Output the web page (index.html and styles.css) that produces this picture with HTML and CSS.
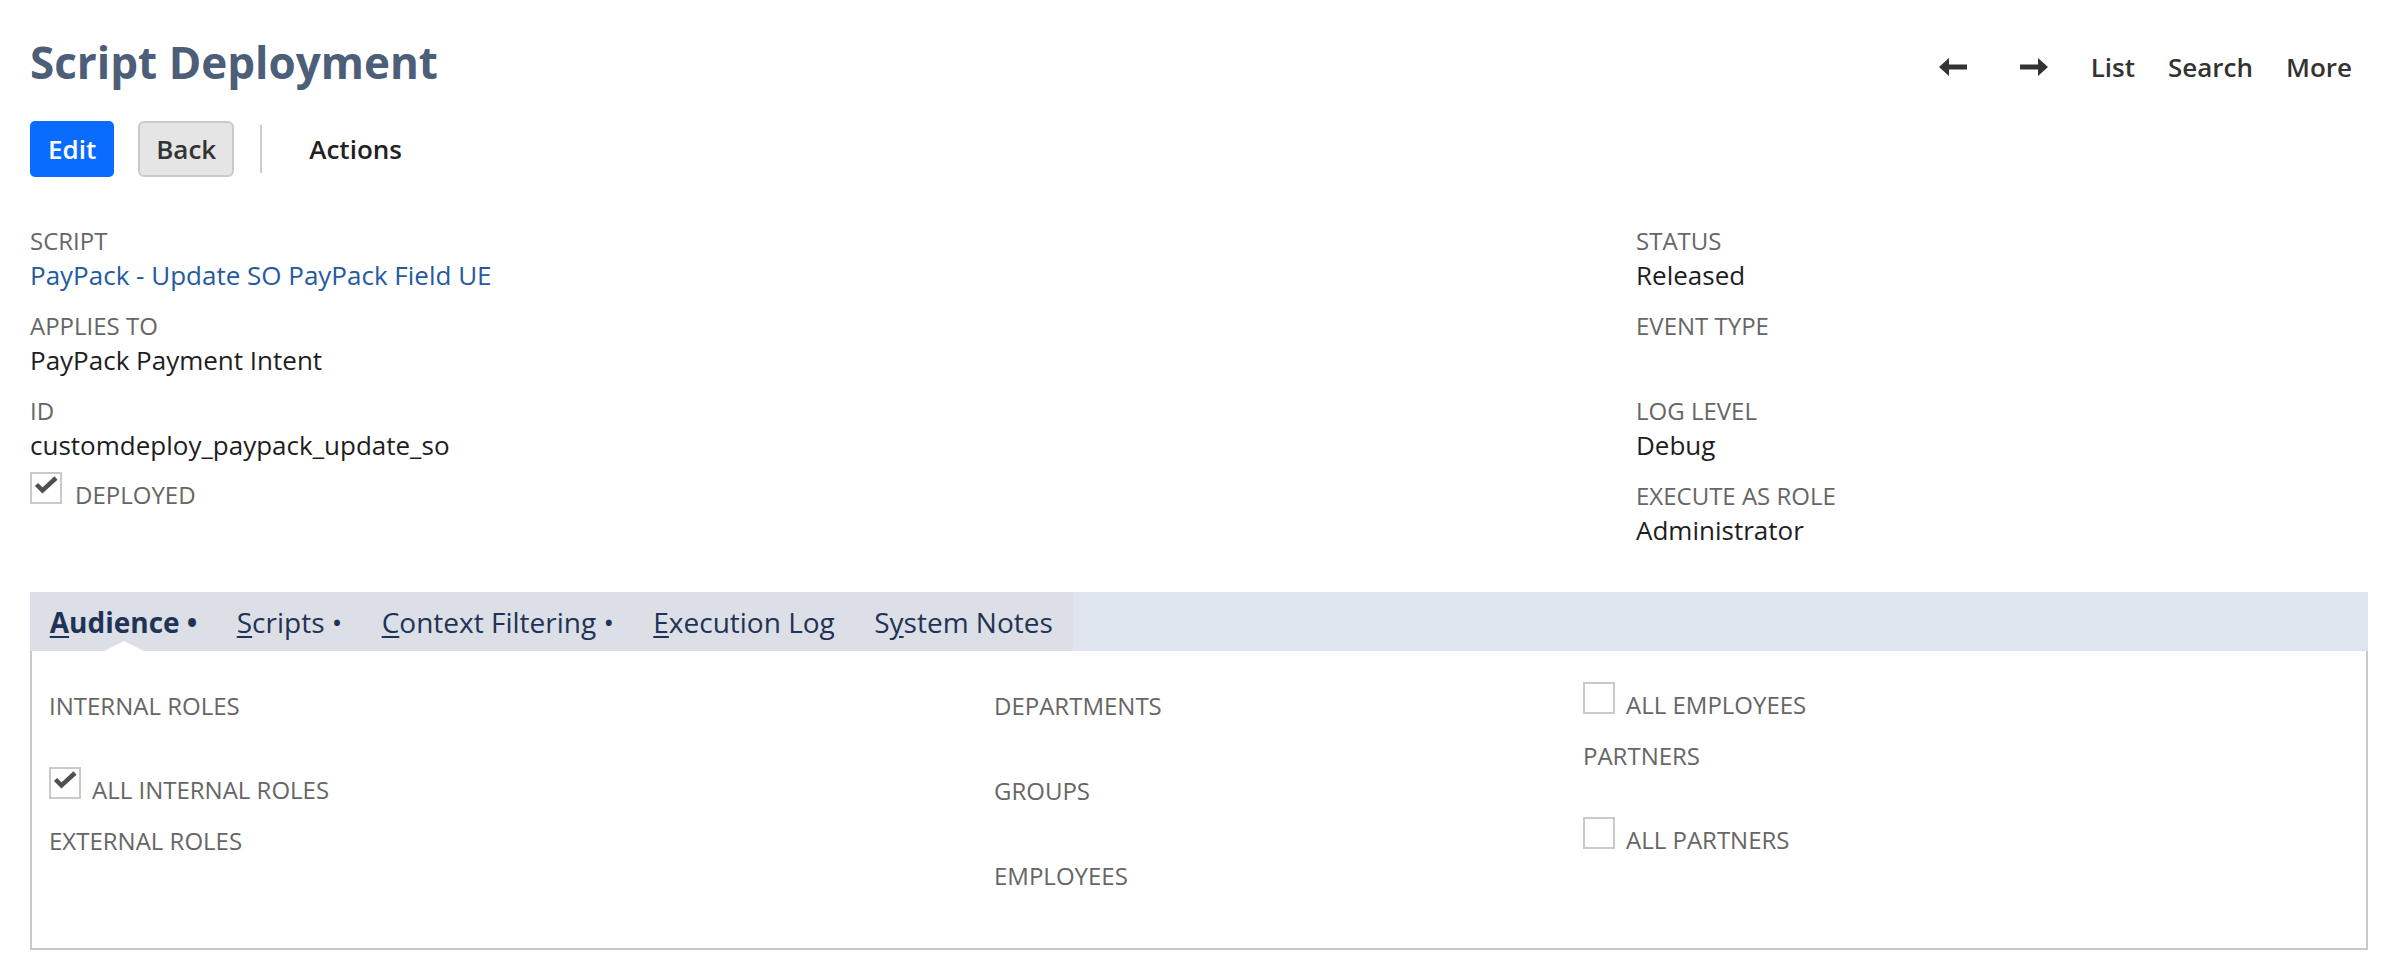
FILE: index.html
```html
<!DOCTYPE html>
<html lang="en">
<head>
    <meta charset="UTF-8">
    <title>Script Deployment</title>
    <link rel="stylesheet" href="styles.css">
</head>
<body>
<div class="page">

    <!-- Title and record navigation -->
    <div class="page-header">
        <h1 class="page-title">Script Deployment</h1>
        <div class="nav">
            <a class="nav-arrow nav-prev" href="#" title="Previous">
                <svg viewBox="0 0 28 18"><path d="M0 9 L10 0 L10 6.5 L28 6.5 L28 11.5 L10 11.5 L10 18 Z"/></svg>
            </a>
            <a class="nav-arrow nav-next" href="#" title="Next">
                <svg viewBox="0 0 28 18"><path d="M28 9 L18 0 L18 6.5 L0 6.5 L0 11.5 L18 11.5 L18 18 Z"/></svg>
            </a>
            <a href="#">List</a>
            <a href="#">Search</a>
            <a href="#">More</a>
        </div>
    </div>

    <!-- Buttons -->
    <div class="toolbar">
        <button class="btn btn-primary">Edit</button>
        <button class="btn">Back</button>
        <span class="toolbar-sep"></span>
        <span class="toolbar-menu">Actions</span>
    </div>

    <!-- Main fields -->
    <div class="fields">
        <div class="field-col">
            <div class="field">
                <div class="field-label">Script</div>
                <div class="field-value"><a href="#">PayPack - Update SO PayPack Field UE</a></div>
            </div>
            <div class="field">
                <div class="field-label">Applies To</div>
                <div class="field-value">PayPack Payment Intent</div>
            </div>
            <div class="field">
                <div class="field-label">ID</div>
                <div class="field-value">customdeploy_paypack_update_so</div>
            </div>
            <div class="check-row check-row-wide">
                <span class="checkbox checked">
                    <svg viewBox="0 0 28 28"><polyline points="4.5,10.5 10.5,16.5 24,4"/></svg>
                </span>
                <span class="check-label">Deployed</span>
            </div>
        </div>
        <div class="field-col">
            <div class="field">
                <div class="field-label">Status</div>
                <div class="field-value">Released</div>
            </div>
            <div class="field">
                <div class="field-label">Event Type</div>
                <div class="field-value"></div>
            </div>
            <div class="field">
                <div class="field-label">Log Level</div>
                <div class="field-value">Debug</div>
            </div>
            <div class="field">
                <div class="field-label">Execute As Role</div>
                <div class="field-value">Administrator</div>
            </div>
        </div>
    </div>

    <!-- Subtabs -->
    <div class="tabs">
        <div class="tab-bar">
            <div class="tab-list">
                <span class="tab tab-active"><u>A</u>udience •</span>
                <span class="tab"><u>S</u>cripts •</span>
                <span class="tab"><u>C</u>ontext Filtering •</span>
                <span class="tab"><u>E</u>xecution Log</span>
                <span class="tab">S<u>y</u>stem Notes</span>
            </div>
        </div>
        <div class="tab-panel">
            <div class="audience">
                <div class="field-col">
                    <div class="field">
                        <div class="field-label">Internal Roles</div>
                        <div class="field-value"></div>
                    </div>
                    <div class="check-row">
                        <span class="checkbox checked">
                            <svg viewBox="0 0 28 28"><polyline points="4.5,10.5 10.5,16.5 24,4"/></svg>
                        </span>
                        <span class="check-label">All Internal Roles</span>
                    </div>
                    <div class="field">
                        <div class="field-label">External Roles</div>
                        <div class="field-value"></div>
                    </div>
                </div>
                <div class="field-col">
                    <div class="field">
                        <div class="field-label">Departments</div>
                        <div class="field-value"></div>
                    </div>
                    <div class="field">
                        <div class="field-label">Groups</div>
                        <div class="field-value"></div>
                    </div>
                    <div class="field">
                        <div class="field-label">Employees</div>
                        <div class="field-value"></div>
                    </div>
                </div>
                <div class="field-col">
                    <div class="check-row">
                        <span class="checkbox"></span>
                        <span class="check-label">All Employees</span>
                    </div>
                    <div class="field">
                        <div class="field-label">Partners</div>
                        <div class="field-value"></div>
                    </div>
                    <div class="check-row">
                        <span class="checkbox"></span>
                        <span class="check-label">All Partners</span>
                    </div>
                </div>
            </div>
        </div>
    </div>

</div>
</body>
</html>
```

FILE: styles.css
```css
body {
    margin: 0;
    background-color: #fff;
    color: #222;
    font-family: "Open Sans", "Liberation Sans", sans-serif;
}
.page {
    padding: 0 28px 0 30px;
}

/* Header */
.page-header {
    display: flex;
    justify-content: space-between;
    align-items: flex-start;
    padding-top: 30px;
    padding-right: 16px;
}
.page-title {
    margin: 0;
    font-size: 44px;
    line-height: 64px;
    font-weight: 700;
    color: #4d5e78;
}
.nav {
    display: flex;
    align-items: center;
    gap: 33px;
    margin-top: 19px;
}
.nav a {
    font-size: 26px;
    line-height: 36px;
    font-weight: 600;
    color: #333;
    text-decoration: none;
}
.nav-arrow svg {
    display: block;
    width: 28px;
    height: 18px;
    fill: #333;
}
.nav-prev {
    margin-right: 20px;
}
.nav-next {
    margin-right: 10px;
}

/* Toolbar */
.toolbar {
    display: flex;
    align-items: center;
    margin-top: 27px;
    height: 56px;
}
.btn {
    box-sizing: border-box;
    height: 56px;
    padding: 0 16px;
    margin-right: 24px;
    font-family: inherit;
    font-size: 26px;
    line-height: 52px;
    font-weight: 600;
    color: #333;
    background-color: #e5e5e5;
    border: 2px solid #cacaca;
    border-radius: 6px;
    cursor: pointer;
}
.btn-primary {
    color: #fff;
    background-color: #0a6cff;
    border-color: #0a6cff;
    border-radius: 5px;
}
.toolbar-sep {
    width: 2px;
    height: 48px;
    margin: 0 47px 0 2px;
    background-color: #cbcbcb;
}
.toolbar-menu {
    font-size: 26px;
    font-weight: 600;
    color: #222;
}

/* Fields */
.fields {
    display: grid;
    grid-template-columns: 1606px 1fr;
    margin-top: 48px;
}
.field {
    margin-bottom: 17px;
}
.field-label,
.check-label {
    font-size: 24px;
    line-height: 32px;
    color: #666;
    text-transform: uppercase;
}
.field-value {
    min-height: 36px;
    font-size: 26px;
    line-height: 36px;
    color: #1e1e1e;
}
.field-value a {
    color: #255a9f;
    text-decoration: none;
}
.check-row {
    display: flex;
    align-items: baseline;
    gap: 11px;
    margin-top: -8px;
    margin-bottom: 19px;
}
.check-row-wide {
    gap: 13px;
}
.checkbox {
    flex: none;
    box-sizing: border-box;
    width: 32px;
    height: 32px;
    border: 2px solid #c9c9c9;
    background-color: #fff;
}
.checkbox svg {
    display: block;
    width: 28px;
    height: 28px;
    fill: none;
    stroke: #4f4f4f;
    stroke-width: 4.5;
}

/* Subtabs */
.tabs {
    margin-top: 27px;
}
.tab-bar {
    display: flex;
    background-color: #dfe5ef;
}
.tab-list {
    display: flex;
    background-color: #dcdfe6;
}
.tab {
    position: relative;
    padding: 2px 19.7px 0;
    font-size: 28px;
    line-height: 57px;
    color: #1f3357;
}
.tab u {
    text-underline-offset: 3px;
}
.tab-active {
    font-weight: 700;
}
.tab-active::after {
    content: "";
    position: absolute;
    left: 50%;
    bottom: 0;
    margin-left: -20px;
    border-left: 20px solid transparent;
    border-right: 20px solid transparent;
    border-bottom: 10px solid #fff;
}
.tab-panel {
    padding: 39px 17px 3px;
    border: 2px solid #c9c9c9;
    border-top: none;
}
.audience {
    display: grid;
    grid-template-columns: 945px 589px 1fr;
}
```
